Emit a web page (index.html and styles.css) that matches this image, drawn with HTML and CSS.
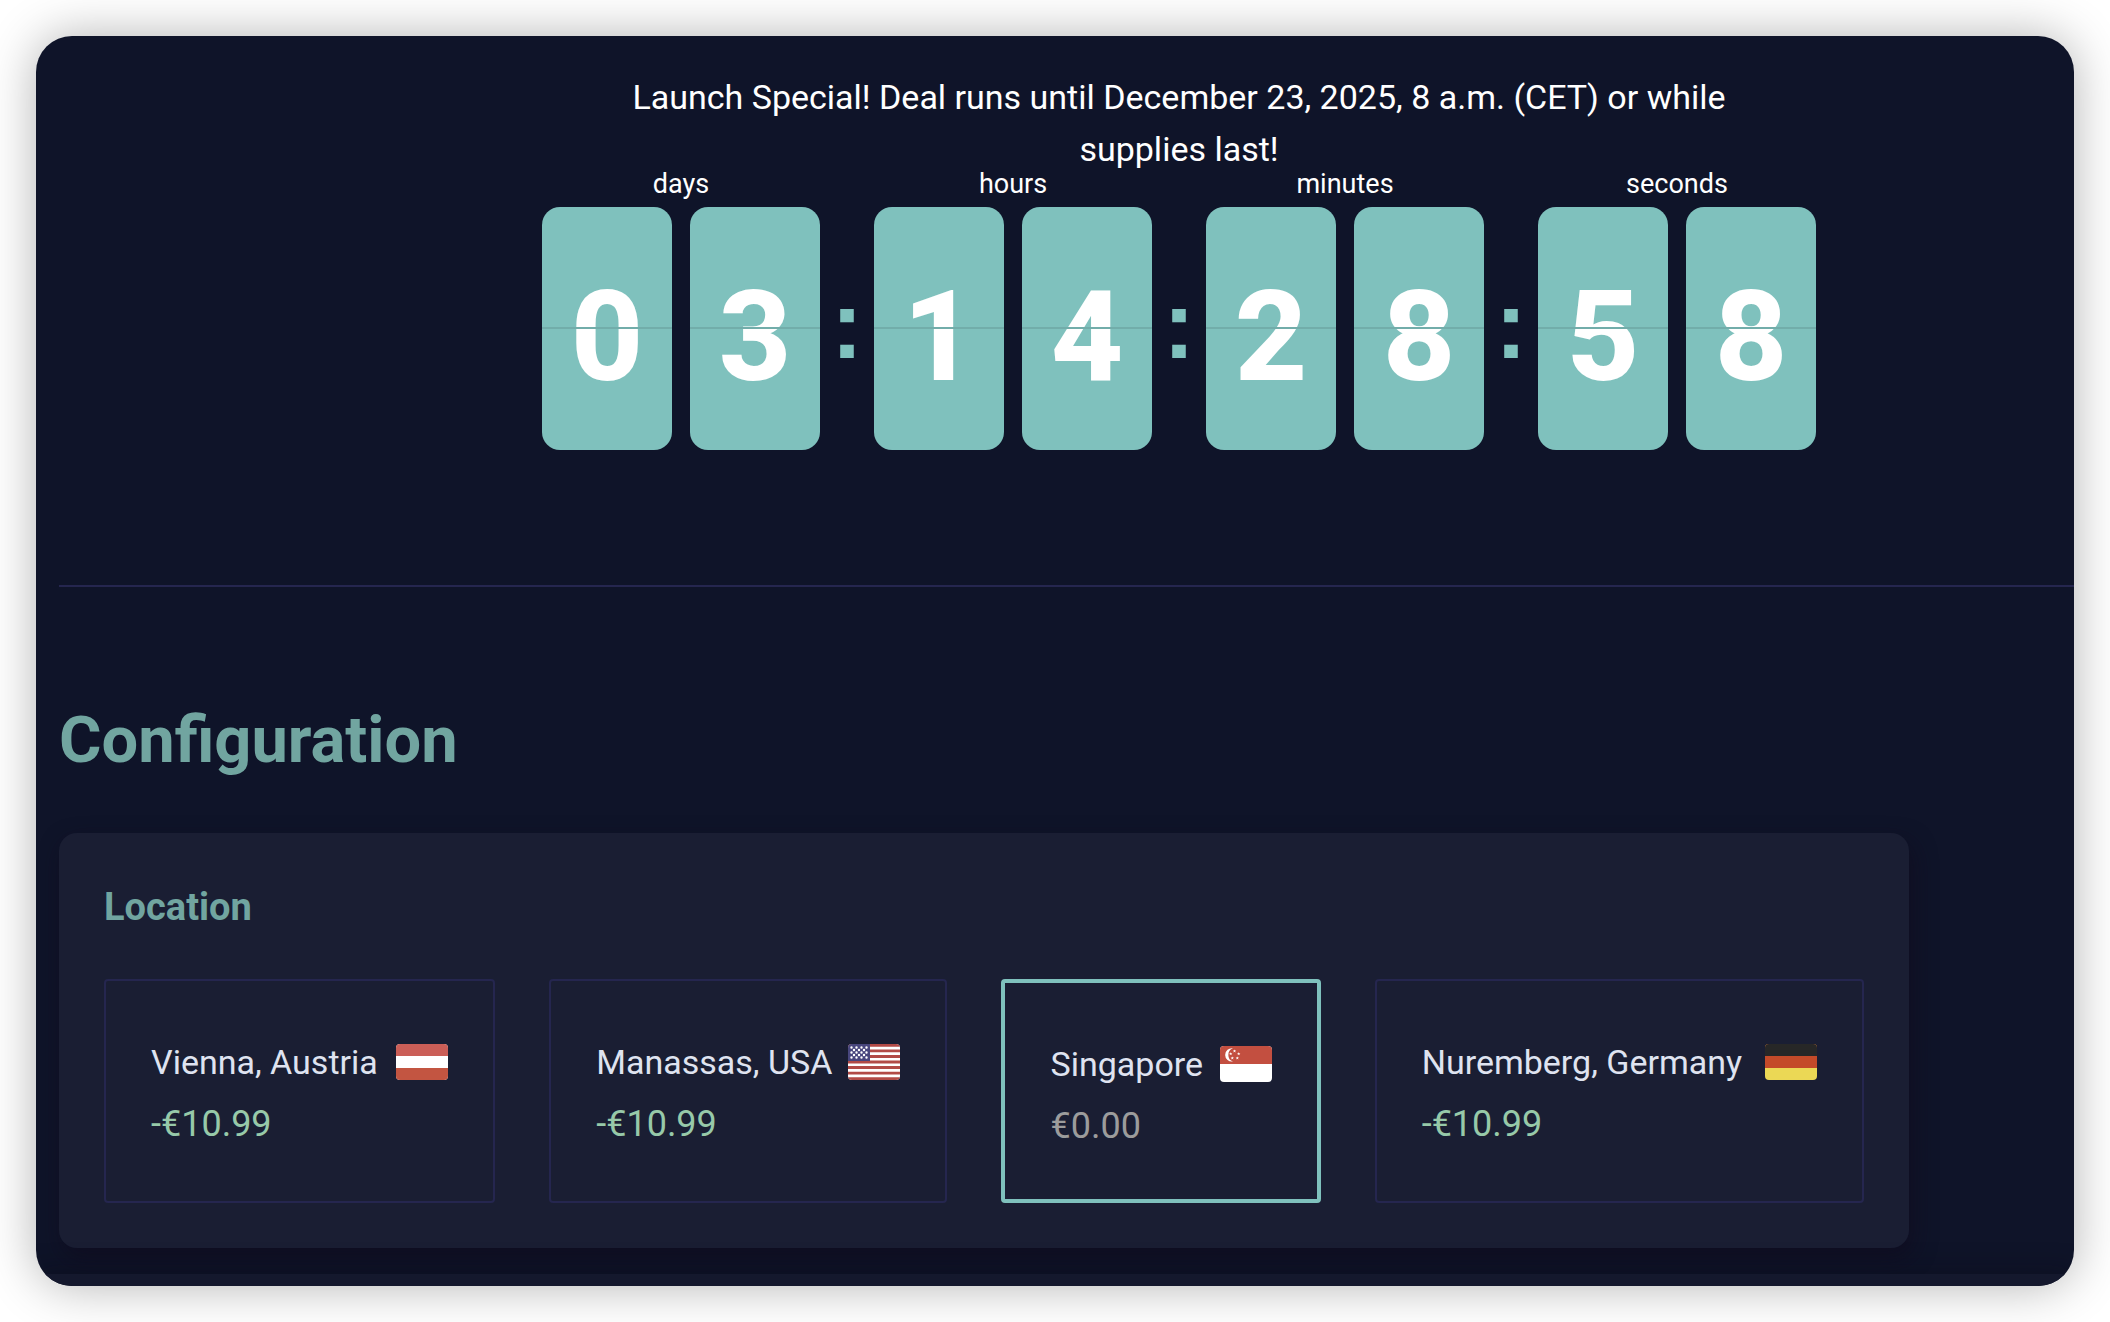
FILE: index.html
```html
<!DOCTYPE html>
<html lang="en">
<head>
    <meta charset="utf-8">
    <title>Configuration</title>
    <link rel="stylesheet" href="styles.css">
</head>
<body>
    <main class="window">
        <!-- the countdown -->
        <section class="deal">
            <p class="deal-text">Launch Special! Deal runs until December 23, 2025, 8 a.m. (CET) or while supplies last!</p>
            <div class="clock">
                <div class="unit">
                    <span class="label">days</span>
                    <div class="digits"><span class="digit">0</span><span class="digit">3</span></div>
                </div>
                <span class="colon">:</span>
                <div class="unit">
                    <span class="label">hours</span>
                    <div class="digits"><span class="digit">1</span><span class="digit">4</span></div>
                </div>
                <span class="colon">:</span>
                <div class="unit">
                    <span class="label">minutes</span>
                    <div class="digits"><span class="digit">2</span><span class="digit">8</span></div>
                </div>
                <span class="colon">:</span>
                <div class="unit">
                    <span class="label">seconds</span>
                    <div class="digits"><span class="digit">5</span><span class="digit">8</span></div>
                </div>
            </div>
        </section>

        <!-- the server options -->
        <section class="config">
            <h1 class="title">Configuration</h1>
            <fieldset class="panel">
                <h2 class="subtitle" id="location">Location</h2>
                <div class="options" role="radiogroup" aria-labelledby="location">
                    <label class="option">
                        <input class="radio" type="radio" name="location" value="vienna">
                        <span class="place">Vienna, Austria
                            <svg class="flag" viewBox="0 0 52 36" aria-hidden="true">
                                <rect width="52" height="36" fill="#fff"/>
                                <rect width="52" height="12" fill="#cb5e57"/>
                                <rect y="24" width="52" height="12" fill="#c35541"/>
                            </svg>
                        </span>
                        <span class="price">-€10.99</span>
                    </label>
                    <label class="option">
                        <input class="radio" type="radio" name="location" value="manassas">
                        <span class="place">Manassas, USA
                            <svg class="flag" viewBox="0 0 52 36" aria-hidden="true">
                                <rect width="52" height="36" fill="#fff"/>
                                <path d="M0 1.4h52M0 6.9h52M0 12.5h52M0 18h52M0 23.5h52M0 29.1h52M0 34.6h52" stroke="#b24a46" stroke-width="2.8"/>
                                <rect width="22" height="17" fill="#48467d"/>
                                <g stroke="#fff" stroke-width="2.4" stroke-linecap="round" stroke-dasharray="0 5">
                                    <path d="M3.5 3.5h16M3.5 8.5h16M3.5 13.5h16"/>
                                    <path d="M6 6h11M6 11h11"/>
                                </g>
                            </svg>
                        </span>
                        <span class="price">-€10.99</span>
                    </label>
                    <label class="option">
                        <input class="radio" type="radio" name="location" value="singapore" checked>
                        <span class="place">Singapore
                            <svg class="flag" viewBox="0 0 52 36" aria-hidden="true">
                                <rect width="52" height="36" fill="#fff"/>
                                <rect width="52" height="18" fill="#c34f40"/>
                                <path d="M13 2.3a6.7 6.7 0 1 0 0 13.2a7 7 0 0 1 0-13.2z" fill="#fff"/>
                                <g fill="#fff">
                                    <path id="star" d="M14.5 3.4l.5 1.1h1.2l-1 .8.4 1.2-1.1-.7-1.1.7.4-1.2-1-.8h1.2z"/>
                                    <use href="#star" x="4.2" y="2.8"/>
                                    <use href="#star" x="2.8" y="7"/>
                                    <use href="#star" x="-2.2" y="7"/>
                                    <use href="#star" x="-3.8" y="2.8"/>
                                </g>
                            </svg>
                        </span>
                        <span class="price price-none">€0.00</span>
                    </label>
                    <label class="option">
                        <input class="radio" type="radio" name="location" value="nuremberg">
                        <span class="place">Nuremberg, Germany
                            <svg class="flag" viewBox="0 0 52 36" aria-hidden="true">
                                <rect width="52" height="36" fill="#ebd855"/>
                                <rect width="52" height="24" fill="#c44a29"/>
                                <rect width="52" height="12" fill="#272727"/>
                            </svg>
                        </span>
                        <span class="price">-€10.99</span>
                    </label>
                </div>
            </fieldset>
        </section>

        <div class="next"></div>
    </main>
</body>
</html>
```
FILE: styles.css
```css
body {
    margin: 0;
    padding: 36px;
    background: white;
    color: white;
    font-family: Roboto, "Liberation Sans", sans-serif;
    font-weight: 400;
}

.window {
    background: #0f1429;
    border-radius: 36px;
    box-shadow: 0 0 50px rgba(0,0,0,0.3);
    overflow: hidden;
    padding-left: 23px;
}

/* The countdown */
.deal {
    display: flex;
    flex-direction: column;
    align-items: center;
    padding: 35px 0 135px 225px;
    border-bottom: 2px solid #25264f;
}

.deal-text {
    max-width: 1120px;
    margin: 0;
    font-size: 34px;
    line-height: 52px;
    text-align: center;
}

.clock {
    display: flex;
}

.unit {
    display: flex;
    flex-direction: column;
    gap: 14px;
}

.label {
    font-size: 27px;
    line-height: 18px;
    text-align: center;
}

.digits {
    display: flex;
    gap: 18px;
}

.digit {
    position: relative;
    width: 130px;
    padding-top: 18px;
    border-radius: 18px;
    background: #7fc1bd;
    font-size: 126px;
    line-height: 225px;
    font-weight: 800;
    text-align: center;
}

/* the fold across each card */
.digit::after {
    content: "";
    position: absolute;
    left: 0;
    right: 0;
    top: 120px;
    height: 2px;
    background: #72adaa;
}

.colon {
    width: 54px;
    padding-top: 32px;
    color: #7fc1bd;
    font-family: "Liberation Sans", Arial, sans-serif;
    font-size: 96px;
    line-height: 236px;
    font-weight: 700;
    text-align: center;
}

/* The configuration */
.config {
    padding: 115px 165px 26px 0;
}

.title {
    margin: 0 0 55px;
    color: #71a5a0;
    font-size: 65px;
    line-height: 76px;
    font-weight: 700;
}

.panel {
    margin: 0;
    padding: 51px 45px 45px;
    border: none;
    border-radius: 18px;
    background: #1a1e33;
    box-shadow: 4px 9px 22px rgba(16,10,28,0.6);
}

.subtitle {
    margin: 0 0 49px;
    color: #71a5a0;
    font-size: 38px;
    line-height: 46px;
    font-weight: 700;
}

.options {
    display: grid;
    grid-template-columns: 391fr 398fr 319fr 489fr;
    gap: 54px;
}

.option {
    padding: 50px 45px 42px;
    border: 2px solid #25264f;
    border-radius: 4px;
    font-size: 34px;
    line-height: 62px;
    cursor: pointer;
}

.option:has(.radio:checked) {
    border: 4px solid #7fc1bd;
}

.radio {
    position: absolute;
    appearance: none;
    margin: 0;
}

.place {
    display: flex;
    justify-content: space-between;
    align-items: center;
    color: #dfe3f0;
    white-space: nowrap;
}

.flag {
    width: 52px;
    height: 36px;
    border-radius: 4px;
}

.price {
    display: block;
    color: #97c9a9;
    font-size: 36px;
}

.price-none {
    color: #9c9c9c;
}

/* top edge of the next section */
.next {
    height: 12px;
    margin-left: -23px;
    background: #14182d;
    box-shadow: 0 0 27px rgba(8,8,20,0.6);
}
```
